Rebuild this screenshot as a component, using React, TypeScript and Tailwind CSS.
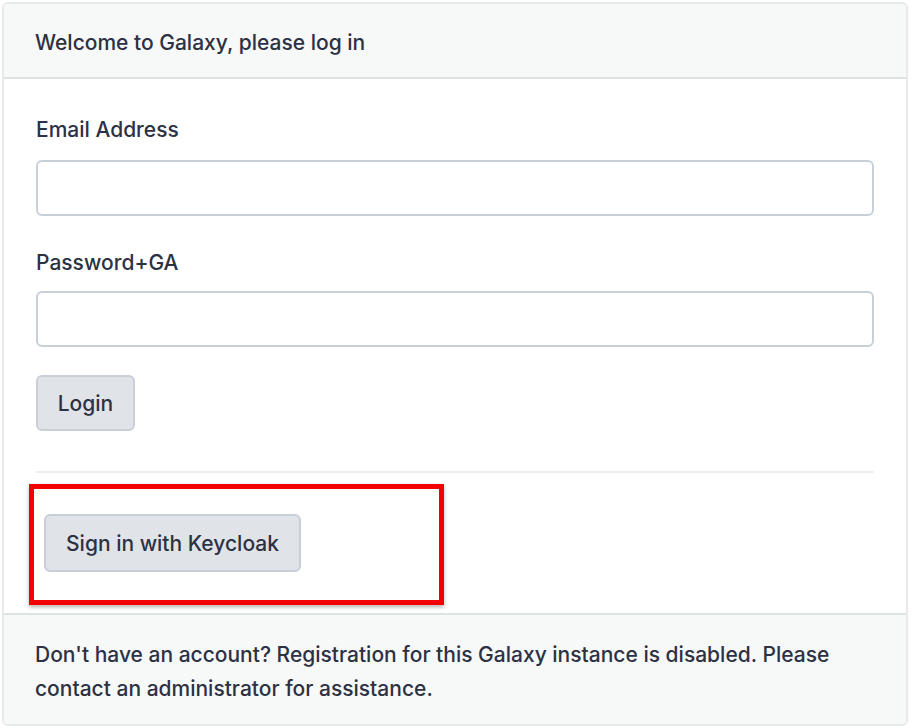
export default function App() {
  return (
    <div className="h-[728px] w-[912px] bg-white p-[2px] font-['Inter','Liberation_Sans',sans-serif] font-medium text-[#2c3143]">
      <div className="flex h-[724px] w-[906px] flex-col overflow-hidden rounded-md border-2 border-[#e7e9eb]">
        <div className="flex h-[75px] items-center border-b-2 border-[#dfe2e5] bg-[#f7f8f8] px-[31px] pt-[4px] text-[21px]">
          Welcome to Galaxy, please log in
        </div>

        <div className="flex flex-1 flex-col px-[32px] pt-[38px]">
          <label className="text-[21px] leading-[26px]">Email Address</label>
          <input className="mt-[17px] h-[56px] w-[838px] rounded-md border-2 border-[#c9cfd9] bg-white" />

          <label className="mt-[32px] pt-[2px] text-[21px] leading-[26px]">Password+GA</label>
          <input
            type="password"
            className="mt-[15px] h-[56px] w-[838px] rounded-md border-2 border-[#c9cfd9] bg-white"
          />

          <div>
            <button className="mt-[28px] h-[56px] w-[99px] rounded-md border-2 border-[#c9cfd9] bg-[#e0e3e8] pt-[3px] text-[21px]">
              Login
            </button>
          </div>

          <div className="mt-[40px] h-[2px] w-[838px] bg-[#eceef0]" />

          <div className="-ml-[7px] mt-[11px] h-[121px] w-[415px] border-[5px] border-[#f50000] pl-[10px] pt-[25px] shadow-[0_2px_4px_rgba(0,0,0,0.3)]">
            <button className="h-[58px] w-[257px] rounded-md border-2 border-[#c9cfd9] bg-[#e0e3e8] pt-[2px] text-[21px]">
              Sign in with Keycloak
            </button>
          </div>
        </div>

        <div className="mt-[8px] h-[112px] border-t-2 border-[#dfe2e5] bg-[#f7f8f8] px-[31px] pt-[23px] text-[21px] leading-[34px]">
          Don't have an account? Registration for this Galaxy instance is disabled. Please
          <br />
          contact an administrator for assistance.
        </div>
      </div>
    </div>
  )
}
